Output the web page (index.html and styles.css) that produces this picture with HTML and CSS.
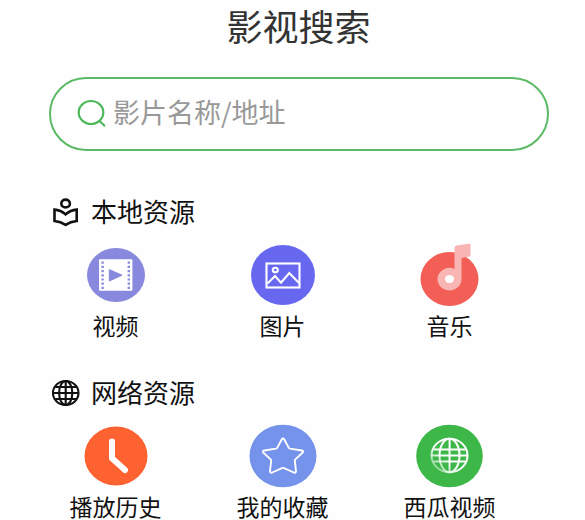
FILE: index.html
```html
<!DOCTYPE html>
<html lang="zh-CN">
<head>
<meta charset="utf-8">
<meta name="viewport" content="width=device-width, initial-scale=1">
<title>影视搜索</title>
<link rel="stylesheet" href="styles.css">
</head>
<body>
<main class="page">
  <h1 class="title">影视搜索</h1>

  <form class="search" role="search">
    <label class="search-label" for="query" aria-label="影片名称/地址">
      <svg class="search-icon" viewBox="0 0 30 30" fill="none" stroke="#4db85a" stroke-width="2.2" stroke-linecap="round">
        <ellipse cx="14" cy="13.5" rx="12.3" ry="11.5"/>
        <path d="M22.5 22 27.3 26.5"/>
      </svg>
    </label>
    <input class="search-input" id="query" type="text" placeholder="影片名称/地址">
  </form>

  <section class="section">
    <h2 class="heading">
      <svg class="heading-icon" viewBox="0 0 28 32" fill="none" stroke="#111" stroke-width="2.6">
        <ellipse cx="13.6" cy="8.5" rx="4.3" ry="3.9"/>
        <path d="M2.5 14.6C7 14.9 10.5 16.6 13.6 19.4 16.7 16.6 20.2 14.9 24.7 14.6V26C20.2 26.4 16.9 27.6 13.6 29.8 10.3 27.6 7 26.4 2.5 26Z"/>
      </svg>
      本地资源
    </h2>
    <nav class="grid">
      <a class="item" href="#video">
        <svg class="item-icon" viewBox="0 0 68 64">
          <ellipse cx="34" cy="32" rx="29" ry="27" fill="#8889de"/>
          <rect x="17" y="16.3" width="33.4" height="31.4" rx="1" fill="#fff"/>
          <path d="M20.6 18.6V46M46.8 18.6V46" stroke="#8889de" stroke-width="2.4" stroke-dasharray="2.2 2" fill="none"/>
          <path d="M27.3 26.6 40 32.2 27.3 38Z" fill="#8889de" stroke="#8889de" stroke-linejoin="round"/>
        </svg>
        视频
      </a>
      <a class="item" href="#image">
        <svg class="item-icon" viewBox="0 0 68 64">
          <ellipse cx="34" cy="32" rx="32" ry="30" fill="#6768ef"/>
          <g fill="none" stroke="#fff" stroke-width="2.1">
            <rect x="17.5" y="20.5" width="33" height="24"/>
            <ellipse cx="26.3" cy="27" rx="2.5" ry="2.3"/>
            <path d="M18.5 40.5 26 33 32 39.7 40.3 30 50 40"/>
          </g>
        </svg>
        图片
      </a>
      <a class="item" href="#music">
        <svg class="item-icon" viewBox="0 0 68 64">
          <ellipse cx="33.5" cy="36" rx="29" ry="27" fill="#f35e57"/>
          <path d="M38.5 26V5Q38.5 3 40.5 2.6L53 .8Q54.5 .6 54.5 2V12.3Q54.5 13.3 53.5 13.5L45.5 15V36A12 11.3 0 1 1 38.5 25.9Z" fill="#f9b5b3"/>
          <ellipse cx="33.5" cy="36" rx="4.5" ry="4.1" fill="#fff"/>
        </svg>
        音乐
      </a>
    </nav>
  </section>

  <section class="section">
    <h2 class="heading">
      <svg class="heading-icon" viewBox="0 0 28 32" fill="none" stroke="#111" stroke-width="2.1">
        <ellipse cx="13.7" cy="17" rx="12.8" ry="12"/>
        <ellipse cx="13.7" cy="17" rx="6.6" ry="12"/>
        <path d="M13.7 5V29M1 17H26.5M3 11H24.4M3 23H24.4"/>
      </svg>
      网络资源
    </h2>
    <nav class="grid">
      <a class="item" href="#history">
        <svg class="item-icon" viewBox="0 0 68 64">
          <ellipse cx="34" cy="32" rx="31.5" ry="29.5" fill="#fe6231"/>
          <path d="M30 17.5V34.3L43 46" fill="none" stroke="#fff" stroke-width="6" stroke-linecap="round" stroke-linejoin="round"/>
        </svg>
        播放历史
      </a>
      <a class="item" href="#favorites">
        <svg class="item-icon" viewBox="0 0 68 64">
          <ellipse cx="34" cy="32" rx="33.5" ry="31.3" fill="#7693eb"/>
          <path d="M32.7 15.5Q34 13.4 35.3 15.5L39.7 23.6Q40.1 24.4 41 24.6L52.8 26.5Q55 27 53.5 28.8L46.1 35.6 45.8 36.6 47 47Q47 49.3 44.8 48.5L35 44.1Q34 43.7 33 44.1L23.2 48.5Q21 49.3 21 47L22.2 36.6 21.9 35.6 14.5 28.8Q13 27 15.2 26.5L27 24.6Q27.9 24.4 28.3 23.6Z" fill="none" stroke="#fff" stroke-width="1.9" stroke-linejoin="round"/>
        </svg>
        我的收藏
      </a>
      <a class="item" href="#xigua">
        <svg class="item-icon" viewBox="0 0 68 64">
          <defs>
            <linearGradient id="fade" x1="16" y1="49" x2="30" y2="34" gradientUnits="userSpaceOnUse">
              <stop offset="0.2" stop-color="#fff" stop-opacity="0.35"/>
              <stop offset="1" stop-color="#fff"/>
            </linearGradient>
          </defs>
          <ellipse cx="33.5" cy="32" rx="33.3" ry="31.3" fill="#3cb748"/>
          <g fill="none" stroke="url(#fade)" stroke-width="2">
            <ellipse cx="33.5" cy="31.5" rx="18" ry="16.8"/>
            <ellipse cx="33.5" cy="31.5" rx="10" ry="16.8"/>
            <path d="M33.6 14.7 33.5 48.3M15.5 31.4 51.5 31.5M17.5 25.4 49.5 25.5M17.5 37.4 49.5 37.5"/>
          </g>
        </svg>
        西瓜视频
      </a>
    </nav>
  </section>
</main>
</body>
</html>
```
FILE: styles.css
```css
* {
  box-sizing: border-box;
}

body {
  margin: 0;
  background: #fefefe;
  color: #111;
  font-family: "Noto Sans CJK SC", sans-serif;
}

.title {
  margin: 0;
  padding-left: 12px;
  font-size: 36px;
  line-height: 50px;
  font-weight: 400;
  text-align: center;
  color: #333;
}

.search {
  display: flex;
  align-items: center;
  gap: 6px;
  height: 74px;
  margin: 27px 36px 41px 49px;
  padding: 0 26px;
  border: 2px solid #5cba66;
  border-radius: 37px;
}

.search-label {
  display: flex;
}

.search-icon {
  width: 30px;
  height: 30px;
}

.search-input {
  flex: 1;
  min-width: 0;
  padding: 0 0 4px;
  border: 0;
  outline: 0;
  background: transparent;
  color: #333;
  font-family: inherit;
  font-size: 27px;
  line-height: 40px;
}

.search-input::placeholder {
  color: #999;
  opacity: 1;
}

.section + .section {
  margin-top: 34px;
}

.heading {
  display: flex;
  align-items: center;
  gap: 11px;
  margin: 0 0 13px;
  padding-left: 52px;
  font-size: 26px;
  line-height: 38px;
  font-weight: 400;
}

.heading-icon {
  width: 28px;
  height: 32px;
}

.grid {
  display: grid;
  grid-template-columns: repeat(3, 1fr);
  padding: 0 52px 0 32px;
}

.item {
  display: flex;
  flex-direction: column;
  align-items: center;
  gap: 4px;
  color: inherit;
  font-size: 23px;
  line-height: 28px;
  text-decoration: none;
}

.item-icon {
  width: 68px;
  height: 64px;
}
```
